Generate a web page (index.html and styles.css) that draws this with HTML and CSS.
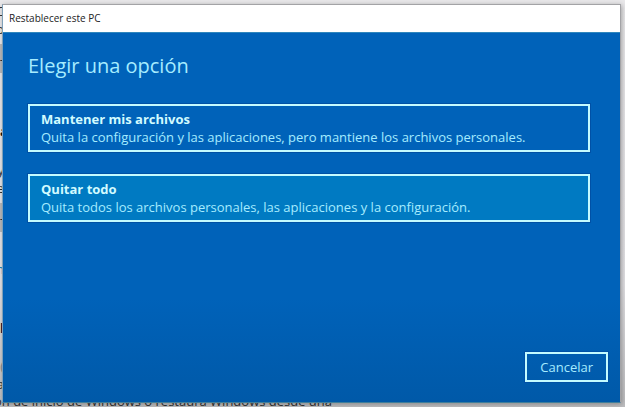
FILE: index.html
```html
<!DOCTYPE html>
<html lang="es">
<head>
<meta charset="utf-8">
<title>Restablecer este PC</title>
<link rel="stylesheet" href="styles.css">
</head>
<body>
<div class="backdrop" aria-hidden="true">
  <div class="strip">
    <p class="line line-top">C</p>
    <p class="line">o</p>
    <p class="block">-</p>
    <p class="line heading">a</p>
    <p class="line">y</p>
    <p class="line">e</p>
    <p class="block">-</p>
    <p class="line link">n</p>
    <p class="line mark">l</p>
    <p class="line soft">(</p>
    <p class="line">a</p>
  </div>
  <p class="footnote">ón de inicio de Windows o restaura Windows desde una</p>
</div>
<main class="dialog" role="dialog" aria-labelledby="dialog-name">
  <header class="titlebar" id="dialog-name">Restablecer este PC</header>
  <section class="content">
    <h1 class="title">Elegir una opción</h1>
    <div class="options">
      <button class="option" type="button">
        <strong class="option-name">Mantener mis archivos</strong>
        <span class="option-text">Quita la configuración y las aplicaciones, pero mantiene los archivos personales.</span>
      </button>
      <button class="option option-active" type="button">
        <strong class="option-name">Quitar todo</strong>
        <span class="option-text">Quita todos los archivos personales, las aplicaciones y la configuración.</span>
      </button>
    </div>
    <footer class="actions">
      <button class="cancel" type="button">Cancelar</button>
    </footer>
  </section>
</main>
</body>
</html>
```
FILE: styles.css
```css
* {
  box-sizing: border-box;
}

body {
  margin: 0;
  min-height: 100vh;
  display: flex;
  padding: 4px 4px 4px 2px;
  overflow: hidden;
  background: #e4e3e6;
  font-family: "Open Sans", "Noto Sans", sans-serif;
}

p,
h1 {
  margin: 0;
}

/* Settings page behind the dialog */
.backdrop {
  position: absolute;
  inset: 0;
  overflow: hidden;
  display: flex;
  flex-direction: column;
  justify-content: space-between;
  background: linear-gradient(#e9e8ea, #e3e2e5 70%, #bdbdbf);
  color: #333;
  font-size: 13px;
  line-height: 18px;
}

.strip {
  width: 4px;
  display: flex;
  flex-direction: column;
}

.line,
.block {
  display: flex;
  justify-content: flex-end;
}

.line-top {
  margin-top: 2px;
}

.block {
  height: 29px;
  margin-top: 6px;
  align-items: center;
  background: #b9b9bb;
}

.heading {
  justify-content: flex-start;
  margin: 49px 0 21px;
  color: #111;
  font-weight: 700;
}

.link {
  margin-top: 28px;
  color: #0a84b8;
}

.mark {
  margin: 41px 0 20px;
  color: #101030;
  font-weight: 700;
}

.soft {
  color: #888;
}

.footnote {
  margin-left: -6px;
  line-height: 12px;
  white-space: nowrap;
}

/* Dialog window */
.dialog {
  position: relative;
  flex: 1;
  display: flex;
  flex-direction: column;
  border: 1px solid #a3a3a6;
  border-left-color: #7fa0b8;
  border-bottom-color: #3f7f9c;
  box-shadow: 1px 1px 5px rgba(0, 0, 0, 0.3);
}

.titlebar {
  padding: 0 6px;
  background: #fff;
  color: #222;
  font-size: 10px;
  line-height: 27px;
}

.content {
  flex: 1;
  display: flex;
  flex-direction: column;
  padding: 20px 30px 20px 25px;
  border-top: 1px solid #2f86bd;
  background: linear-gradient(#0062b9, #0062b9 72%, #0059a8);
  color: #a6ecff;
}

.title {
  font-size: 20px;
  font-weight: 400;
  line-height: 26px;
}

.options {
  display: grid;
  gap: 22px;
  margin-top: 25px;
}

.option,
.cancel {
  border: 2px solid #c4fbff;
  background: transparent;
  color: inherit;
  font-family: inherit;
  font-size: 13px;
  outline: 1px solid #0051a6;
}

.option {
  display: flex;
  flex-direction: column;
  padding: 4px 11px;
  line-height: 18px;
  text-align: left;
}

.option-active {
  background: #007ac2;
}

.option-name {
  color: #d2fbff;
  font-weight: 700;
}

.actions {
  display: flex;
  justify-content: flex-end;
  margin-top: auto;
  margin-right: -18px;
}

.cancel {
  padding: 0 13px;
  line-height: 26px;
}
```
